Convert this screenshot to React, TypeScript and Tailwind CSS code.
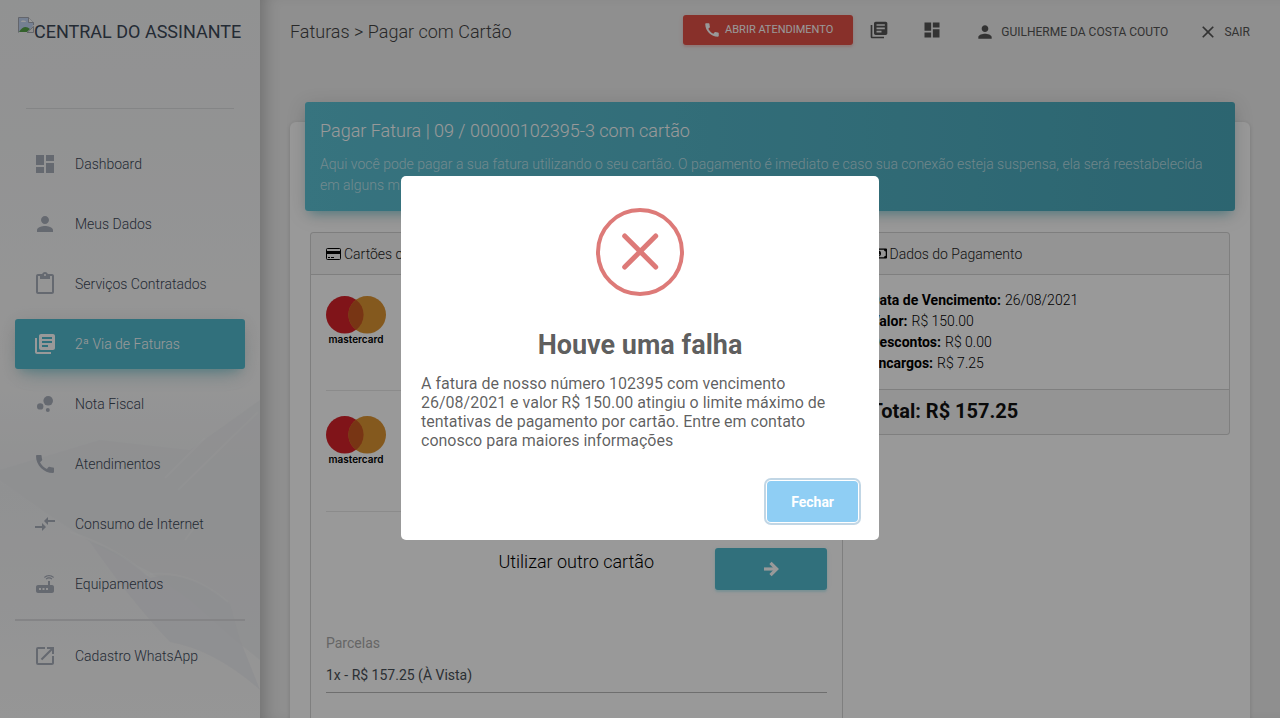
import React from "react";
import {
  MdBubbleChart,
  MdCall,
  MdClose,
  MdCompareArrows,
  MdContentPaste,
  MdDashboard,
  MdLaunch,
  MdLibraryBooks,
  MdPerson,
  MdRouter,
} from "react-icons/md";
import { FaRegMoneyBillAlt } from "react-icons/fa";
import type { IconType } from "react-icons";

type NavItem = { label: string; icon: IconType; active?: boolean };

const navItems: NavItem[] = [
  { label: "Dashboard", icon: MdDashboard },
  { label: "Meus Dados", icon: MdPerson },
  { label: "Serviços Contratados", icon: MdContentPaste },
  { label: "2ª Via de Faturas", icon: MdLibraryBooks, active: true },
  { label: "Nota Fiscal", icon: MdBubbleChart },
  { label: "Atendimentos", icon: MdCall },
  { label: "Consumo de Internet", icon: MdCompareArrows },
  { label: "Equipamentos", icon: MdRouter },
];

function NavLink({ label, icon: Icon, active }: NavItem) {
  return (
    <a
      href="#"
      aria-current={active ? "page" : undefined}
      className={
        active
          ? "flex h-[50px] items-center gap-[18px] rounded-[3px] bg-[#52bbcf] px-[18px] text-sm text-white shadow-[0_12px_20px_-10px_rgba(0,188,212,0.28),0_4px_20px_0_rgba(0,0,0,0.12),0_7px_8px_-5px_rgba(0,188,212,0.2)]"
          : "flex h-[50px] items-center gap-[18px] rounded-[3px] px-[18px] text-sm text-[#3c4858]"
      }
    >
      <Icon className={active ? "size-6 shrink-0" : "size-6 shrink-0 text-[#a9afbb]"} />
      {label}
    </a>
  );
}

function BrokenImageIcon() {
  return (
    <svg viewBox="0 0 16 16" className="size-4 shrink-0 self-start" aria-hidden="true">
      <path d="M0.500 15.500V0.500H10.500L15.500 5.500V8" fill="#c4d6f4" stroke="#a5a9b3" />
      <path d="M1 15V9Q3 4 6 6Q9 3 12 7L15 9L9 15Z" fill="#c4d6f4" />
      <path d="M3 5Q3 3 5 3.500Q8 3 8 5Z" fill="#fff" />
      <path d="M1 15Q6 7 12 12L9 15Z" fill="#58a34a" />
      <path d="M10.500 .5V5.500H15.500" fill="#fff" stroke="#a5a9b3" />
      <path d="M9 15.500L15.500 9.500V15.500Z" fill="#eee" stroke="#a5a9b3" />
    </svg>
  );
}

function CreditCardIcon() {
  return (
    <svg viewBox="0 0 15 12" className="h-3 w-[15px] shrink-0" aria-hidden="true">
      <rect x=".5" y=".5" width="14" height="11" rx="1" fill="none" stroke="#000" />
      <path d="M1 3H14V6H1Z" fill="#000" />
      <path d="M2 9.500H4M5 9.500H8" stroke="#000" />
    </svg>
  );
}

function ArrowRightIcon() {
  return (
    <svg
      viewBox="0 0 16 16"
      className="size-4"
      fill="none"
      stroke="currentColor"
      strokeWidth="3.200"
      aria-hidden="true"
    >
      <path d="M1 8H13" strokeLinecap="butt" />
      <path d="M7.500 1.800L13.700 8L7.500 14.200" strokeLinejoin="miter" />
    </svg>
  );
}

function SidebarBackdrop() {
  return (
    <svg
      viewBox="0 0 260 718"
      preserveAspectRatio="none"
      className="absolute inset-0 size-full"
      aria-hidden="true"
    >
      <defs>
        <linearGradient id="sky" x1="0" y1="0" x2="0" y2="1">
          <stop offset="0" stopColor="#f2f3f4" />
          <stop offset="0.2" stopColor="#f4f5f6" />
          <stop offset="0.5" stopColor="#fafafa" />
          <stop offset="0.68" stopColor="#f1f2f4" />
          <stop offset="1" stopColor="#fafafa" />
        </linearGradient>
      </defs>
      <rect width="260" height="718" fill="url(#sky)" />
      <path d="M0 480L45 512L90 542L150 572L190 600L235 640L260 660V400L190 450L100 440L0 470Z" fill="#edeef0" opacity=".6" />
      <path d="M90 542Q125 552 150 578Q190 568 230 604L240 640L260 690Q215 650 170 642Q130 600 90 542Z" fill="#ebedf1" opacity=".7" />
      <path d="M70 532Q118 548 148 576M150 574Q190 570 228 602M165 478L205 438M178 490L258 412M185 540L200 520" fill="none" stroke="#fff" strokeWidth="2" opacity=".25" />
    </svg>
  );
}

function Sidebar() {
  return (
    <aside className="relative w-[260px] shrink-0 overflow-hidden">
      <SidebarBackdrop />
      <div className="relative">
        <a
          href="#"
          className="mx-[18px] flex h-[92px] pt-[17px] text-lg leading-[30px] whitespace-nowrap text-[#3c4858]"
        >
          <BrokenImageIcon />
          CENTRAL DO ASSINANTE
        </a>
        <hr className="mx-[26px] mt-4 border-[#dcdee0]" />
        <nav className="mt-[30px] flex flex-col gap-2.5 px-[15px] font-light">
          {navItems.map((item) => (
            <NavLink key={item.label} {...item} />
          ))}
          <hr className="border-t-2 border-[#dcdddf]" />
          <NavLink label="Cadastro WhatsApp" icon={MdLaunch} />
        </nav>
      </div>
    </aside>
  );
}

function TopBar() {
  return (
    <header className="flex h-[60px] items-center px-[30px]">
      <h1 className="flex-1 pt-1 text-lg font-light text-[#444]">Faturas &gt; Pagar com Cartão</h1>
      <div className="flex items-center text-xs text-[#555]">
        <button
          type="button"
          className="flex h-[30px] items-center gap-1 rounded-[3px] bg-[#e35046] px-5 text-[11px] text-white shadow-[0_2px_2px_0_rgba(244,67,54,0.14),0_1px_5px_0_rgba(244,67,54,0.12)]"
        >
          <MdCall className="size-[18px]" />
          ABRIR ATENDIMENTO
        </button>
        <a href="#" aria-label="Faturas" className="ml-4">
          <MdLibraryBooks className="size-5" />
        </a>
        <a href="#" aria-label="Dashboard" className="ml-[33px]">
          <MdDashboard className="size-5" />
        </a>
        <a href="#" className="ml-[33px] flex items-center gap-1.5 pt-1">
          <MdPerson className="size-5" />
          GUILHERME DA COSTA COUTO
        </a>
        <a href="#" className="ml-[30px] flex items-center gap-1.5 pt-1">
          <MdClose className="size-5" />
          SAIR
        </a>
      </div>
    </header>
  );
}

function MastercardLogo() {
  return (
    <svg viewBox="0 0 60 50" className="h-[50px] w-[60px]" role="img" aria-label="mastercard">
      <circle cx="18.800" cy="18.800" r="18.800" fill="#d6222a" />
      <circle cx="41.200" cy="18.800" r="18.800" fill="#dd9433" />
      <path d="M30 3.700A18.800 18.800 0 0 1 30 33.900A18.800 18.800 0 0 1 30 3.700Z" fill="#c95922" />
      <text x="30" y="47" textAnchor="middle" fontSize="10" fontWeight="600" fontFamily="Inter, sans-serif" fill="#000">
        mastercard
      </text>
    </svg>
  );
}

function PaymentCards() {
  return (
    <section className="col-span-7 rounded-[3px] border border-[#d4d4d4]">
      <h3 className="flex h-[42px] items-center gap-[3px] border-b border-[#d4d4d4] bg-black/3 px-[15px] text-sm font-light text-[#222]">
        <CreditCardIcon />
        Cartões cadastrados
      </h3>
      <div className="px-[15px]">
        <div className="flex h-[116px] items-start border-b border-[#e8e8e8] pt-[21px]">
          <MastercardLogo />
        </div>
        <div className="flex h-[121px] items-start border-b border-[#e8e8e8] pt-[25px]">
          <MastercardLogo />
        </div>
        <div className="grid grid-cols-[1fr_auto_1fr] pt-9">
          <span className="col-start-2 text-lg font-light text-black">Utilizar outro cartão</span>
          <button
            type="button"
            aria-label="Utilizar outro cartão"
            className="flex h-[42px] w-28 items-center justify-center justify-self-end rounded-[3px] bg-[#52bbcf] text-white shadow-[0_2px_2px_0_rgba(0,188,212,0.14),0_1px_5px_0_rgba(0,188,212,0.12)]"
          >
            <ArrowRightIcon />
          </button>
        </div>
        <label htmlFor="parcelas" className="mt-11 block text-sm leading-[18px] text-[#aaa]">
          Parcelas
        </label>
        <select
          id="parcelas"
          className="mt-1.5 block h-[35px] w-full appearance-none border-b border-[#b8b8b8] text-sm text-[#495057]"
        >
          <option>1x - R$ 157.25 (À Vista)</option>
        </select>
        <div className="h-20" />
      </div>
    </section>
  );
}

const details = [
  ["Data de Vencimento:", "26/08/2021"],
  ["Valor:", "R$ 150.00"],
  ["Descontos:", "R$ 0.00"],
  ["Encargos:", "R$ 7.25"],
];

function PaymentDetails() {
  return (
    <section className="col-span-5 self-start rounded-[3px] border border-[#d4d4d4]">
      <h3 className="flex h-[42px] items-center gap-[3px] border-b border-[#d4d4d4] bg-black/3 px-4 text-sm font-light text-[#222]">
        <FaRegMoneyBillAlt className="size-[17px] text-black" />
        Dados do Pagamento
      </h3>
      <dl className="px-[17px] py-[15px] text-sm leading-[21px] font-light text-black">
        {details.map(([name, value]) => (
          <div key={name} className="flex gap-1">
            <dt className="font-bold">{name}</dt>
            <dd>{value}</dd>
          </div>
        ))}
      </dl>
      <p className="border-t border-[#d4d4d4] bg-black/3 px-[17px] pt-1.5 pb-2 text-xl leading-[30px] font-bold text-[#111]">
        Total: R$ 157.25
      </p>
    </section>
  );
}

function ErrorDialog() {
  return (
    <div className="fixed inset-0 flex items-center justify-center bg-black/40 pb-0.5">
      <div
        role="alertdialog"
        aria-modal="true"
        aria-labelledby="dialog-title"
        aria-describedby="dialog-text"
        className="w-[478px] rounded-[5px] bg-white"
      >
        <svg viewBox="0 0 88 88" className="mx-auto mt-8 size-[88px]" fill="none" stroke="#dd7a78" aria-hidden="true">
          <circle cx="44" cy="44" r="42" strokeWidth="4" />
          <path d="M28.700 28L59.700 59M59.700 28L28.700 59" strokeWidth="5" strokeLinecap="round" />
        </svg>
        <h2 id="dialog-title" className="mt-8 text-center text-[27px] leading-[34px] font-bold text-black/65">
          Houve uma falha
        </h2>
        <p id="dialog-text" className="mt-3 px-5 text-base leading-[19px] text-black/64">
          A fatura de nosso número 102395 com vencimento 26/08/2021 e valor R$ 150.00 atingiu o limite máximo de
          tentativas de pagamento por cartão. Entre em contato conosco para maiores informações
        </p>
        <div className="mt-[31px] flex justify-end px-[21px] pb-[18px]">
          <button
            type="button"
            className="h-[41px] rounded-[4px] bg-[#8fcef4] px-6 text-sm font-bold text-white shadow-[0_0_0_1px_#fff,0_0_0_3px_rgba(43,114,165,0.29)]"
          >
            Fechar
          </button>
        </div>
      </div>
    </div>
  );
}

export default function App() {
  return (
    <div className="flex h-screen overflow-hidden bg-[#eee] font-[Roboto,sans-serif]">
      <Sidebar />
      <div className="min-w-0 flex-1 shadow-[inset_14px_0_16px_-10px_rgba(0,0,0,0.22)]">
        <TopBar />
        <main className="px-[30px] pt-[62px]">
          <div className="rounded-md bg-white px-[15px] pb-8 shadow-[0_1px_4px_0_rgba(0,0,0,0.14)]">
            <div className="relative -top-5 -mb-5 rounded-[3px] bg-linear-to-r from-[#5cc1d4] to-[#4aa8bb] px-[15px] pt-[15px] pb-[15px] text-white shadow-[0_4px_20px_0_rgba(0,0,0,0.14),0_7px_10px_-5px_rgba(0,188,212,0.4)]">
              <h2 className="text-lg leading-7 font-light">Pagar Fatura | 09 / 00000102395-3 com cartão</h2>
              <p className="mt-[9px] text-sm leading-[21px] font-light text-white/62">
                Aqui você pode pagar a sua fatura utilizando o seu cartão. O pagamento é imediato e caso sua conexão
                esteja suspensa, ela será reestabelecida em alguns minutos.
              </p>
            </div>
            <div className="mx-[5px] mt-[21px] grid grid-cols-12 gap-2.5">
              <PaymentCards />
              <PaymentDetails />
            </div>
          </div>
        </main>
      </div>
      <ErrorDialog />
    </div>
  );
}
